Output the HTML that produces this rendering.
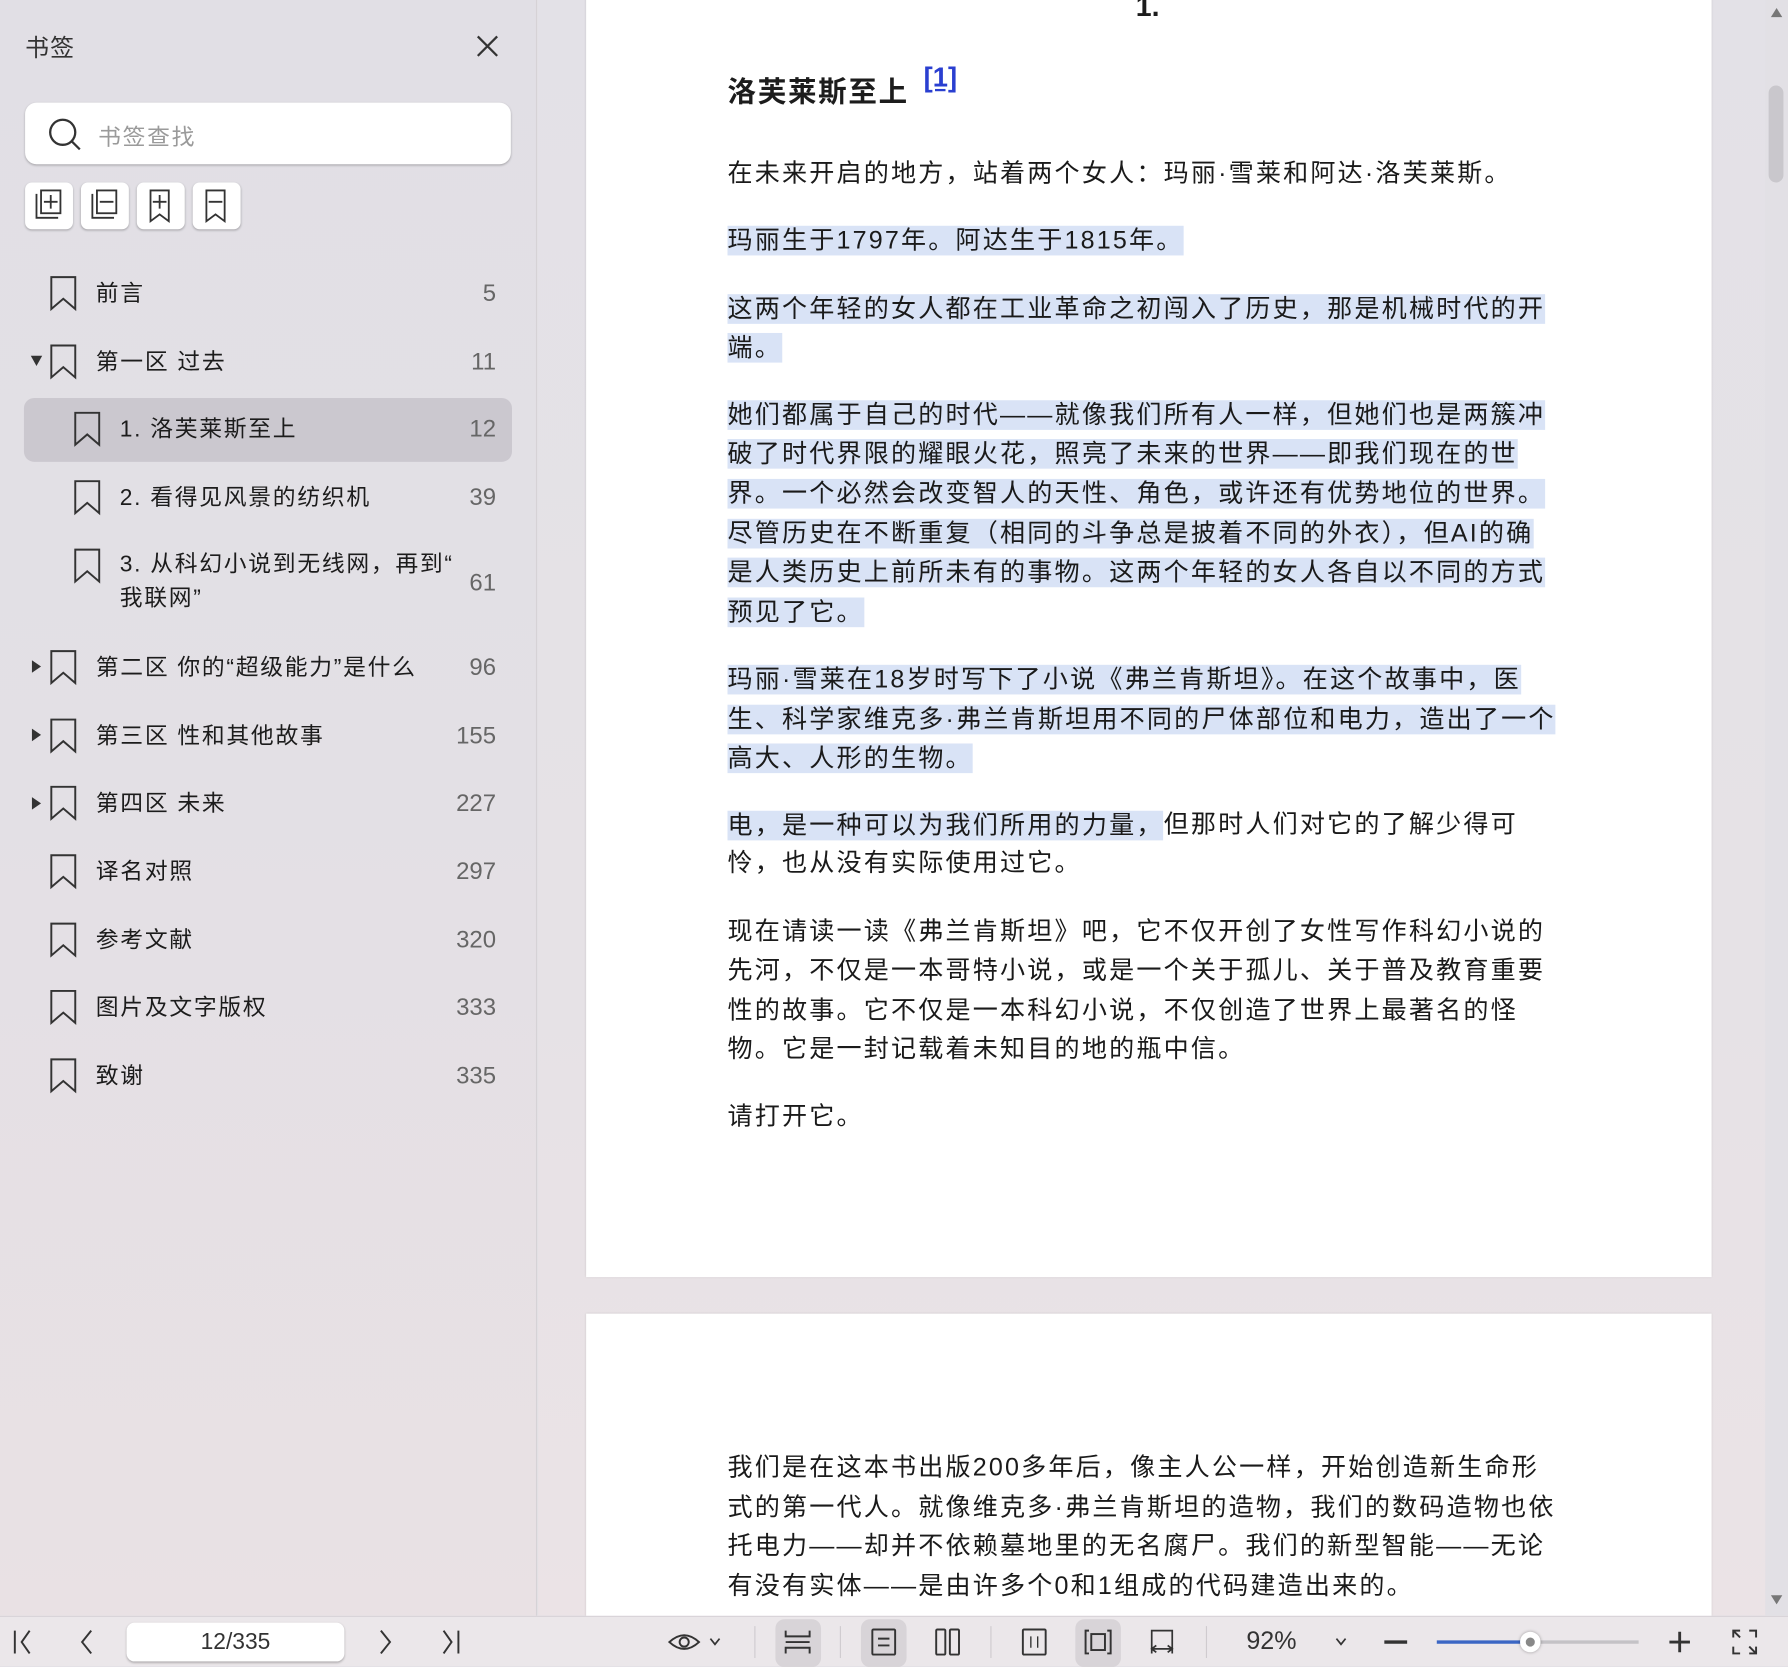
<!DOCTYPE html>
<html><head><meta charset="utf-8">
<style>
*{margin:0;padding:0;box-sizing:border-box}
html,body{width:1788px;height:1666px;overflow:hidden;background:#e4e1e6}
#w{position:absolute;left:0;top:0;width:1568px;height:1461px;transform:scale(1.14031);transform-origin:0 0;font-family:"Liberation Sans","Noto Sans CJK SC",sans-serif;color:#1c1c1c}
.abs{position:absolute}
#side{left:0;top:0;width:471px;height:1417px;background:linear-gradient(180deg,#e1dfe5 0%,#e3e0e5 50%,#e9e1e4 100%);border-right:1px solid #d6d2d6}
#main{left:472px;top:0;width:1096px;height:1417px;background:linear-gradient(180deg,#e3e1e7 0%,#e6e2e6 60%,#ebe3e6 100%)}
.page{background:#fff;box-shadow:0 0 2px rgba(0,0,0,.12)}
.ln{position:absolute;left:638px;font-size:22px;height:34px;line-height:34px;white-space:nowrap;color:#1a1a1a;letter-spacing:1.9px}
.hl{background:#d9e3f6;display:inline-block;height:26px;line-height:26px;vertical-align:middle}
.it{position:absolute;font-size:20px;color:#1c1c1c;white-space:nowrap;letter-spacing:1.5px}
.num{position:absolute;right:35px;font-size:21px;color:#666;text-align:right;margin-top:3px}
#bar{left:0;top:1417px;width:1568px;height:44px;background:#ebe7ea;border-top:1px solid #d8d4d8}
</style></head><body><div id="w">

<div id="side" class="abs">
  <div class="abs" style="left:22px;top:26px;font-size:21px;color:#333;letter-spacing:1px">书签</div>
  <svg class="abs" style="left:417px;top:30px" width="21" height="21" viewBox="0 0 21 21"><path d="M2 2L19 19M19 2L2 19" stroke="#333" stroke-width="2" fill="none"/></svg>
  <div class="abs" style="left:22px;top:90px;width:426px;height:54px;background:#fff;border-radius:10px;box-shadow:0 1px 2px rgba(0,0,0,.25)"></div>
  <svg class="abs" style="left:42px;top:103px" width="30" height="30" viewBox="0 0 30 30"><circle cx="13" cy="13" r="11" stroke="#333" stroke-width="2" fill="none"/><path d="M21 21L28 28" stroke="#333" stroke-width="2"/></svg>
  <div class="abs" style="left:86px;top:104px;font-size:20px;color:#9a9a9a;letter-spacing:1.5px">书签查找</div>
  <div class="abs" style="left:22px;top:160px;width:42px;height:41px;background:#fff;border-radius:6px;box-shadow:0 1px 2px rgba(0,0,0,.25)"></div>
  <div class="abs" style="left:71px;top:160px;width:42px;height:41px;background:#fff;border-radius:6px;box-shadow:0 1px 2px rgba(0,0,0,.25)"></div>
  <div class="abs" style="left:120px;top:160px;width:42px;height:41px;background:#fff;border-radius:6px;box-shadow:0 1px 2px rgba(0,0,0,.25)"></div>
  <div class="abs" style="left:169px;top:160px;width:42px;height:41px;background:#fff;border-radius:6px;box-shadow:0 1px 2px rgba(0,0,0,.25)"></div>
  <svg class="abs" style="left:22px;top:160px" width="200" height="41" viewBox="0 0 200 41" fill="none" stroke="#333" stroke-width="1.6">
    <path d="M10 10V31H29"/><rect x="14" y="7" width="17" height="20"/><path d="M22.5 11V23M16.5 17H28.5"/>
    <path d="M59 10V31H78"/><rect x="63" y="7" width="17" height="20"/><path d="M65.5 17H77.5"/>
    <path d="M110 7H126V34L118 28L110 34Z"/><path d="M118 11V23M112 17H124"/>
    <path d="M159 7H175V34L167 28L159 34Z"/><path d="M161 17H173"/>
  </svg>

  <div class="abs" style="left:21px;top:349px;width:428px;height:56px;background:#cbc8cf;border-radius:9px"></div>

  <svg class="abs" style="left:0;top:0" width="470" height="1000" viewBox="0 0 470 1000" fill="none" stroke="#333" stroke-width="1.7">
    <path d="M45 243H66V271L55.5 262L45 271Z"/>
    <path d="M45 303H66V331L55.5 322L45 331Z"/>
    <path d="M66 362H87V390L76.5 381L66 390Z"/>
    <path d="M66 422H87V450L76.5 441L66 450Z"/>
    <path d="M66 482H87V510L76.5 501L66 510Z"/>
    <path d="M45 571H66V599L55.5 590L45 599Z"/>
    <path d="M45 631H66V659L55.5 650L45 659Z"/>
    <path d="M45 690H66V718L55.5 709L45 718Z"/>
    <path d="M45 750H66V778L55.5 769L45 778Z"/>
    <path d="M45 810H66V838L55.5 829L45 838Z"/>
    <path d="M45 869H66V897L55.5 888L45 897Z"/>
    <path d="M45 929H66V957L55.5 948L45 957Z"/>
    <g fill="#333" stroke="none">
      <path d="M27 312H37L32 321Z"/>
      <path d="M28 579V590L36 584.5Z"/>
      <path d="M28 639V650L36 644.5Z"/>
      <path d="M28 699V710L36 704.5Z"/>
    </g>
  </svg>

  <div class="it" style="left:84px;top:241px">前言</div><div class="num" style="top:243px">5</div>
  <div class="it" style="left:84px;top:301px">第一区 过去</div><div class="num" style="top:303px">11</div>
  <div class="it" style="left:105px;top:360px">1. 洛芙莱斯至上</div><div class="num" style="top:362px">12</div>
  <div class="it" style="left:105px;top:420px">2. 看得见风景的纺织机</div><div class="num" style="top:422px">39</div>
  <div class="it" style="left:105px;top:480px;line-height:30px">3. 从科幻小说到无线网，再到“<br>我联网”</div><div class="num" style="top:497px">61</div>
  <div class="it" style="left:84px;top:569px">第二区 你的“超级能力”是什么</div><div class="num" style="top:571px">96</div>
  <div class="it" style="left:84px;top:629px">第三区 性和其他故事</div><div class="num" style="top:631px">155</div>
  <div class="it" style="left:84px;top:688px">第四区 未来</div><div class="num" style="top:690px">227</div>
  <div class="it" style="left:84px;top:748px">译名对照</div><div class="num" style="top:750px">297</div>
  <div class="it" style="left:84px;top:808px">参考文献</div><div class="num" style="top:810px">320</div>
  <div class="it" style="left:84px;top:867px">图片及文字版权</div><div class="num" style="top:869px">333</div>
  <div class="it" style="left:84px;top:927px">致谢</div><div class="num" style="top:929px">335</div>
</div>

<div id="main" class="abs"></div>
<div class="abs page" style="left:514px;top:-2px;width:987px;height:1122px"></div>
<div class="abs page" style="left:514px;top:1152px;width:987px;height:280px"></div>

<div class="abs" style="left:996px;top:-8px;font-size:25px;font-weight:bold">1.</div>
<div class="abs" style="left:638px;top:61px;font-size:25px;font-weight:bold;letter-spacing:1.5px">洛芙莱斯至上</div>
<div class="abs" style="left:810px;top:55px;font-size:24px;font-weight:bold;color:#2a3fd0;text-decoration:underline">[1]</div>

<div class="ln" style="top:135px">在未来开启的地方，站着两个女人：玛丽·雪莱和阿达·洛芙莱斯。</div>
<div class="ln" style="top:193px"><span class="hl">玛丽生于1797年。阿达生于1815年。</span></div>
<div class="ln" style="top:253px"><span class="hl">这两个年轻的女人都在工业革命之初闯入了历史，那是机械时代的开</span></div>
<div class="ln" style="top:287px"><span class="hl">端。</span></div>
<div class="ln" style="top:346px"><span class="hl">她们都属于自己的时代——就像我们所有人一样，但她们也是两簇冲</span></div>
<div class="ln" style="top:380px"><span class="hl">破了时代界限的耀眼火花，照亮了未来的世界——即我们现在的世</span></div>
<div class="ln" style="top:415px"><span class="hl">界。一个必然会改变智人的天性、角色，或许还有优势地位的世界。</span></div>
<div class="ln" style="top:450px"><span class="hl">尽管历史在不断重复（相同的斗争总是披着不同的外衣），但AI的确</span></div>
<div class="ln" style="top:484px"><span class="hl">是人类历史上前所未有的事物。这两个年轻的女人各自以不同的方式</span></div>
<div class="ln" style="top:519px"><span class="hl">预见了它。</span></div>
<div class="ln" style="top:578px"><span class="hl">玛丽·雪莱在18岁时写下了小说《弗兰肯斯坦》。在这个故事中，医</span></div>
<div class="ln" style="top:613px"><span class="hl">生、科学家维克多·弗兰肯斯坦用不同的尸体部位和电力，造出了一个</span></div>
<div class="ln" style="top:647px"><span class="hl">高大、人形的生物。</span></div>
<div class="ln" style="top:706px"><span class="hl">电，是一种可以为我们所用的力量，</span>但那时人们对它的了解少得可</div>
<div class="ln" style="top:740px">怜，也从没有实际使用过它。</div>
<div class="ln" style="top:800px">现在请读一读《弗兰肯斯坦》吧，它不仅开创了女性写作科幻小说的</div>
<div class="ln" style="top:834px">先河，不仅是一本哥特小说，或是一个关于孤儿、关于普及教育重要</div>
<div class="ln" style="top:869px">性的故事。它不仅是一本科幻小说，不仅创造了世界上最著名的怪</div>
<div class="ln" style="top:903px">物。它是一封记载着未知目的地的瓶中信。</div>
<div class="ln" style="top:962px">请打开它。</div>

<div class="ln" style="top:1270px">我们是在这本书出版200多年后，像主人公一样，开始创造新生命形</div>
<div class="ln" style="top:1305px">式的第一代人。就像维克多·弗兰肯斯坦的造物，我们的数码造物也依</div>
<div class="ln" style="top:1339px">托电力——却并不依赖墓地里的无名腐尸。我们的新型智能——无论</div>
<div class="ln" style="top:1374px">有没有实体——是由许多个0和1组成的代码建造出来的。</div>

<div class="abs" style="left:1548px;top:0;width:20px;height:1417px;background:#e2e0e5"></div>
<div class="abs" style="left:1551px;top:75px;width:13px;height:85px;background:#c9c7cc;border-radius:7px"></div>
<svg class="abs" style="left:1552px;top:6px" width="12" height="10"><path d="M1 9H11L6 1Z" fill="#777"/></svg>
<svg class="abs" style="left:1552px;top:1398px" width="12" height="10"><path d="M1 1H11L6 9Z" fill="#777"/></svg>

<div id="bar" class="abs">
  <div class="abs" style="left:680px;top:2px;width:40px;height:42px;background:#d8d4d8;border-radius:8px"></div>
  <div class="abs" style="left:755px;top:2px;width:40px;height:42px;background:#d8d4d8;border-radius:8px"></div>
  <div class="abs" style="left:943px;top:2px;width:40px;height:42px;background:#d8d4d8;border-radius:8px"></div>
  <div class="abs" style="left:111px;top:5px;width:191px;height:34px;background:#fff;border-radius:7px;box-shadow:0 1px 2px rgba(0,0,0,.25);text-align:center;font-size:20px;line-height:34px;color:#333">12/335</div>
  <div class="abs" style="left:1093px;top:8px;font-size:22px;color:#333">92%</div>
  <svg class="abs" style="left:0;top:0" width="1568" height="44" viewBox="0 0 1568 44" fill="none" stroke="#333" stroke-width="1.7">
    <path d="M13 12V32M26 12L19 22L26 32"/>
    <path d="M80 12L72 22L80 32"/>
    <path d="M334 12L342 22L334 32"/>
    <path d="M389 12L396 22L389 32M402 12V32"/>
    <path d="M587 22Q600 10 613 22Q600 34 587 22Z"/><circle cx="600" cy="22" r="4"/>
    <path d="M623 19L627 24L631 19" stroke-width="1.5"/>
    <path d="M662 8V36M737 8V36M869 8V36M1058 8V36" stroke="#cfcbcf" stroke-width="1"/>
    <path d="M689 12V17H710V12M689 32V27H710V32M689 22H710"/>
    <rect x="765" y="11" width="20" height="22" rx="1"/><path d="M770 19H780M770 25H780"/>
    <rect x="821" y="11" width="8" height="22" rx="1"/><rect x="833" y="11" width="8" height="22" rx="1"/>
    <rect x="897" y="11" width="20" height="22" rx="1"/><path d="M904 17V27M910 17V27" stroke-width="1.2"/>
    <path d="M955 12H952V32H955M971 12H974V32H971"/><rect x="957" y="15" width="12" height="14"/>
    <path d="M1010 32V12H1028V32M1010 28H1028M1014 25L1010 28L1014 31M1024 25L1028 28L1024 31" stroke-width="1.5"/>
    <path d="M1172 19L1176 24L1180 19" stroke-width="1.5"/>
    <path d="M1214 22H1234" stroke-width="3"/>
    <path d="M1260 22H1342" stroke="#3b66c4" stroke-width="3"/>
    <path d="M1342 22H1437" stroke="#c4c2c6" stroke-width="3"/>
    <path d="M1464 22H1482M1473 13V31" stroke-width="2.5"/>
    <path d="M1520 18V12H1526M1534 12H1540V18M1540 26V32H1534M1526 32H1520V26M1520 12L1526 18M1540 32L1534 26"/>
  </svg>
  <div class="abs" style="left:1333px;top:13px;width:18px;height:18px;border-radius:50%;background:#fff;box-shadow:0 0 3px rgba(0,0,0,.35)"></div>
  <div class="abs" style="left:1338px;top:18px;width:8px;height:8px;border-radius:50%;background:#888"></div>
</div>

</div></body></html>
